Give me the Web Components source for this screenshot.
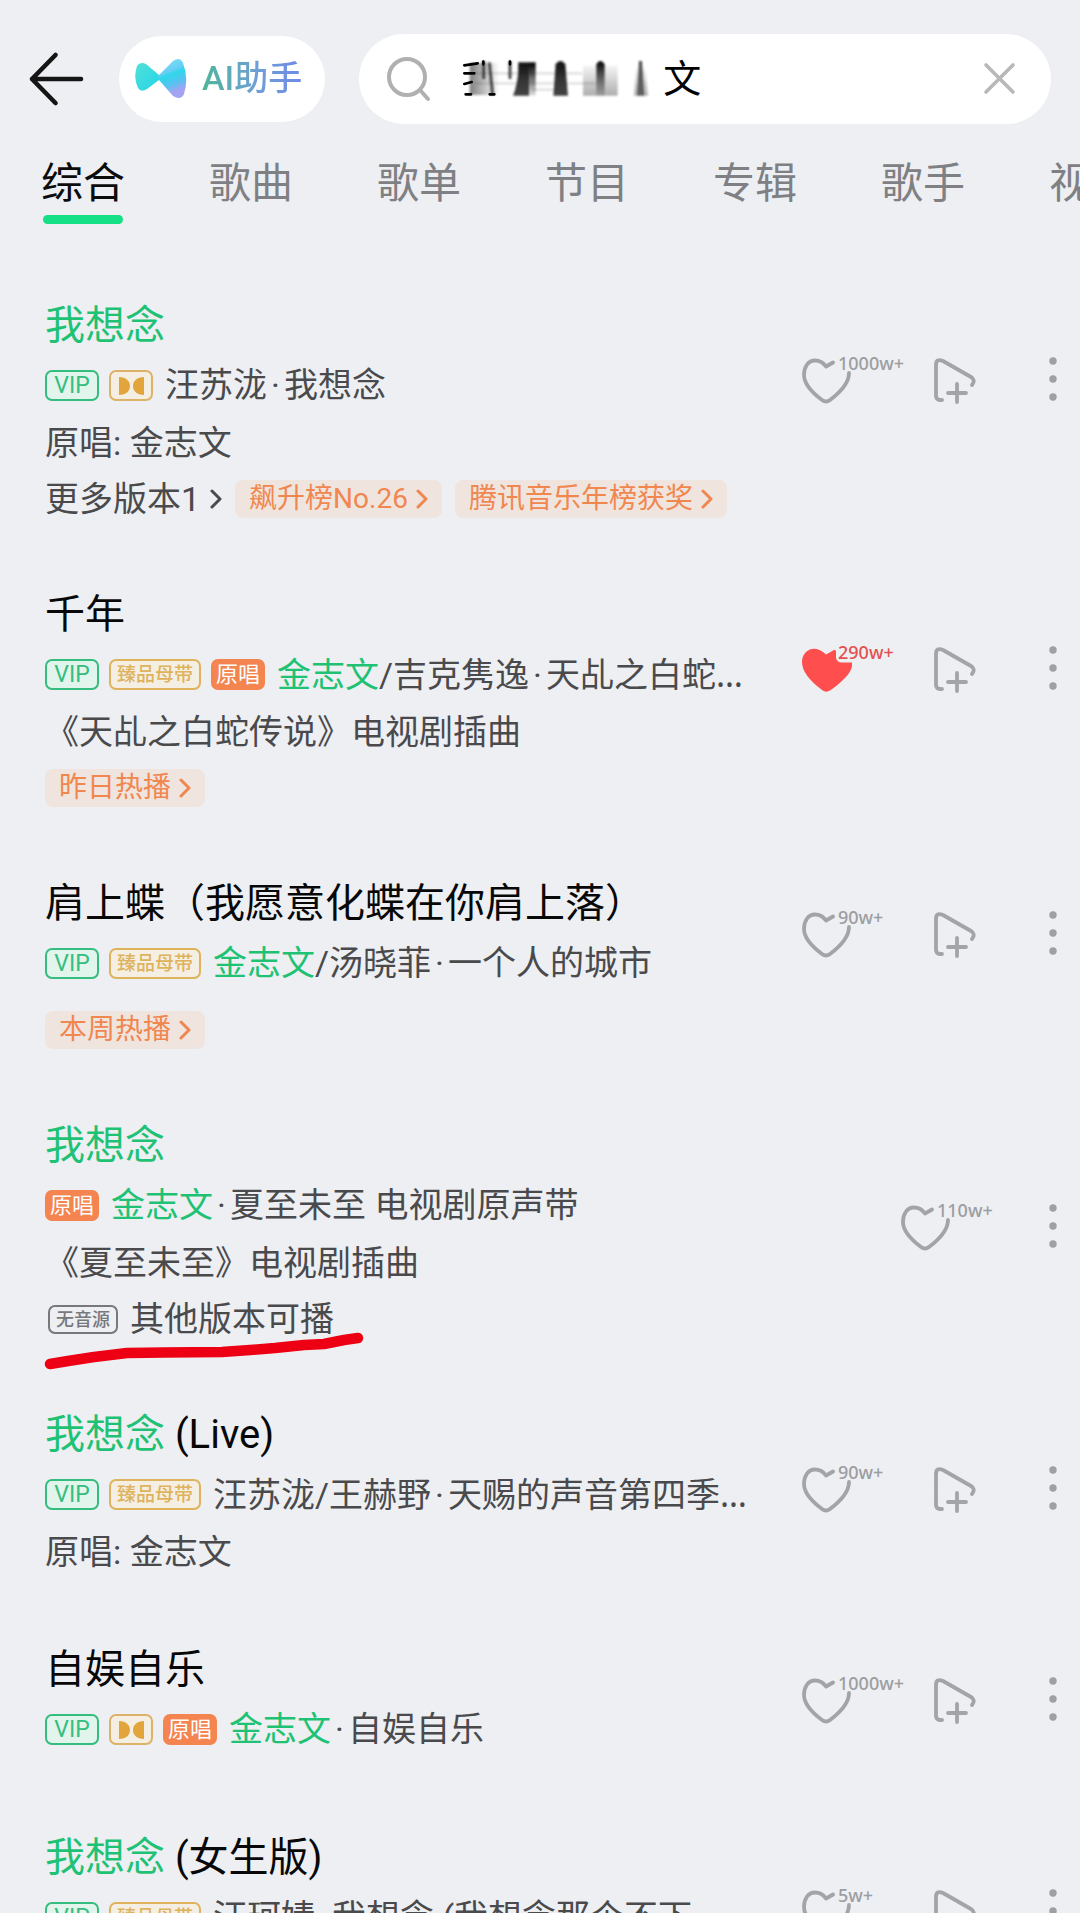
<!DOCTYPE html>
<html lang="zh-CN">
<head>
<meta charset="utf-8">
<meta name="viewport" content="width=device-width, initial-scale=1">
<title>搜索</title>
<style>
  body {
    margin: 0;
    background: #edeff3;
    color: #4a4a4c;
    font-family: Roboto, "Noto Sans CJK SC", sans-serif;
  }
  song-item mark { background: none; color: #1fc274; }
  song-item i { font-style: normal; font-family: "Noto Sans", sans-serif; }
</style>
</head>
<body>
<search-page>
  <search-header slot="header"></search-header>
  <category-tabs slot="tabs" items="综合,歌曲,歌单,节目,专辑,歌手,视频" current="综合"></category-tabs>

  <song-item count="1000w+">
    <mark slot="title">我想念</mark>
    <song-badge slot="badges" kind="vip">VIP</song-badge>
    <song-badge slot="badges" kind="sound"></song-badge>
    <span slot="sub">汪苏泷<mid-dot></mid-dot>我想念</span>
    <span slot="note">原唱: 金志文</span>
    <more-link slot="tags">更多版本1</more-link>
    <rank-tag slot="tags">飙升榜No.26</rank-tag>
    <rank-tag slot="tags">腾讯音乐年榜获奖</rank-tag>
  </song-item>

  <song-item count="290w+" liked>
    <span slot="title">千年</span>
    <song-badge slot="badges" kind="vip">VIP</song-badge>
    <song-badge slot="badges" kind="quality">臻品母带</song-badge>
    <song-badge slot="badges" kind="origin">原唱</song-badge>
    <span slot="sub"><mark>金志文</mark>/吉克隽逸<mid-dot></mid-dot>天乩之白蛇<i>…</i></span>
    <span slot="note">《天乩之白蛇传说》电视剧插曲</span>
    <rank-tag slot="tags">昨日热播</rank-tag>
  </song-item>

  <song-item count="90w+">
    <span slot="title">肩上蝶（我愿意化蝶在你肩上落）</span>
    <song-badge slot="badges" kind="vip">VIP</song-badge>
    <song-badge slot="badges" kind="quality">臻品母带</song-badge>
    <span slot="sub"><mark>金志文</mark>/汤晓菲<mid-dot></mid-dot>一个人的城市</span>
    <rank-tag slot="tags">本周热播</rank-tag>
  </song-item>

  <song-item count="110w+" unplayable>
    <mark slot="title">我想念</mark>
    <song-badge slot="badges" kind="origin">原唱</song-badge>
    <span slot="sub"><mark>金志文</mark><mid-dot></mid-dot>夏至未至 电视剧原声带</span>
    <span slot="note">《夏至未至》电视剧插曲</span>
    <song-badge slot="source" kind="muted">无音源</song-badge>
    <span slot="source">其他版本可播</span>
    <pen-stroke slot="overlay"></pen-stroke>
  </song-item>

  <song-item count="90w+">
    <span slot="title"><mark>我想念</mark> (Live)</span>
    <song-badge slot="badges" kind="vip">VIP</song-badge>
    <song-badge slot="badges" kind="quality">臻品母带</song-badge>
    <span slot="sub">汪苏泷/王赫野<mid-dot></mid-dot>天赐的声音第四季<i>…</i></span>
    <span slot="note">原唱: 金志文</span>
  </song-item>

  <song-item count="1000w+">
    <span slot="title">自娱自乐</span>
    <song-badge slot="badges" kind="vip">VIP</song-badge>
    <song-badge slot="badges" kind="sound"></song-badge>
    <song-badge slot="badges" kind="origin">原唱</song-badge>
    <span slot="sub"><mark>金志文</mark><mid-dot></mid-dot>自娱自乐</span>
  </song-item>

  <song-item count="5w+">
    <span slot="title"><mark>我想念</mark> (女生版)</span>
    <song-badge slot="badges" kind="vip">VIP</song-badge>
    <song-badge slot="badges" kind="quality">臻品母带</song-badge>
    <span slot="sub">汪珂婧<mid-dot></mid-dot>我想念 (我想念那个不下</span>
    <span slot="note">原唱: 金志文</span>
  </song-item>
</search-page>

<script>
const define = (name, render) => customElements.define(name, class extends HTMLElement {
  constructor() {
    super();
    this.attachShadow({ mode: 'open' });
  }
  connectedCallback() {
    this.shadowRoot.innerHTML = render(this);
  }
});

const buttonReset = 'button { appearance: none; border: 0; margin: 0; padding: 0; background: none; font: inherit; color: inherit; cursor: pointer; }';
const chevron = '<svg width="12" height="22" viewBox="0 0 12 22" fill="none" stroke="currentColor" stroke-width="3" stroke-linecap="round" stroke-linejoin="round" aria-hidden="true"><path d="M2 3 L10 11 L2 19"/></svg>';

define('search-page', () => `
  <style>
    :host { display: flex; flex-direction: column; height: 100vh; overflow: hidden; }
    main { flex: 1; min-height: 0; overflow-y: auto; scrollbar-width: none; padding-top: 71px; }
    main::-webkit-scrollbar { display: none; }
  </style>
  <slot name="header"></slot>
  <slot name="tabs"></slot>
  <main><slot></slot></main>`);

define('search-header', () => `
  <style>
    ${buttonReset}
    :host { display: flex; align-items: center; gap: 34px; padding: 34px 29px 0 28px; }
    svg { display: block; flex: none; }
    .lead { display: flex; align-items: center; gap: 34px; }
    .ai { display: flex; align-items: center; gap: 15px; height: 86px; padding: 0 23px 0 15px; border-radius: 43px; background: #fff; font-size: 34px; line-height: 40px; }
    .ai span { background: linear-gradient(90deg, #4fb59a, #6f9fd6 55%, #6f8ae6); -webkit-background-clip: text; background-clip: text; color: transparent; font-weight: 500; padding-bottom: 2px; }
    form { flex: 1; min-width: 0; display: flex; align-items: center; height: 90px; padding: 0 34px 0 27px; border-radius: 45px; background: #fff; }
    label { display: flex; align-items: center; gap: 32px; }
    input { flex: 1; min-width: 0; border: 0; outline: 0; padding: 0; background: none; color: #000; font: 400 38px/56px Roboto, "Noto Sans CJK SC", sans-serif; }
  </style>
  <div class="lead">
    <button aria-label="返回"><svg width="57" height="56" viewBox="0 0 57 56" fill="none" stroke="#151515" stroke-width="4.6" stroke-linecap="round" stroke-linejoin="round"><path d="M27.500 4 L4 28 L27.500 52 M4 28 H53"/></svg></button>
    <button class="ai">
      <svg width="53" height="42" viewBox="0 0 53 42" aria-hidden="true">
        <defs>
          <linearGradient id="l" x1="0" y1="0" x2="1" y2="1"><stop offset="0" stop-color="#52e0d4"/><stop offset="1" stop-color="#22d5ec"/></linearGradient>
          <linearGradient id="r" x1=".3" y1="0" x2=".6" y2="1"><stop offset="0" stop-color="#7be4f6"/><stop offset=".32" stop-color="#66cdf5"/><stop offset=".4" stop-color="#2ed8ea"/><stop offset=".66" stop-color="#5cc0f0"/><stop offset=".85" stop-color="#a3a3f2"/></linearGradient>
        </defs>
        <path fill="url(#l)" d="M3 8 Q6 3 12 6 L25 17 Q28 20 25 22 L13 31 Q7 35 4 30 Q-1 20 3 8Z"/>
        <path fill="url(#r)" d="M25 17 L39 3 Q46 -2 49 5 Q55 20 50 36 Q47 43 39 38 L25 22 Q23 20 25 17Z"/>
      </svg>
      <span>AI助手</span>
    </button>
  </div>
  <form role="search" onsubmit="return false">
    <label for="q" aria-label="搜索">
      <svg width="45" height="46" viewBox="0 0 45 46" fill="none" stroke="#b0b0b0" stroke-width="4" stroke-linecap="round"><circle cx="21" cy="21" r="18"/><path d="M34 34 L42 43"/></svg>
      <svg width="200" height="44" viewBox="42 24 600 132" aria-hidden="true">
        <defs>
          <linearGradient id="f" x1="0" y1="0" x2="0" y2="1"><stop offset="0" stop-color="#111"/><stop offset=".5" stop-color="#333"/><stop offset="1" stop-color="#444"/></linearGradient>
          <linearGradient id="g" x1="0" y1="0" x2="0" y2="1"><stop offset="0" stop-color="#000" stop-opacity=".04"/><stop offset="1" stop-color="#000" stop-opacity=".32"/></linearGradient>
          <linearGradient id="h" x1="0" y1="0" x2="1" y2="0"><stop offset="0" stop-color="#000" stop-opacity=".5"/><stop offset="1" stop-color="#000" stop-opacity="0"/></linearGradient>
          <linearGradient id="d" x1="0" y1="0" x2="0" y2="1"><stop offset="0" stop-color="#000"/><stop offset="1" stop-color="#000" stop-opacity=".12"/></linearGradient>
          <filter id="b"><feGaussianBlur stdDeviation="2.500"/></filter>
        </defs>
        <g filter="url(#b)">
          <path fill="url(#h)" d="M62 42 H150 V138 H62Z"/>
          <path fill="none" stroke="#000" stroke-opacity=".13" stroke-width="7" d="M80 73 H400 M80 103 H440 M250 122 H320"/>
          <path fill="none" stroke="#222" stroke-width="9" stroke-opacity=".8" d="M104 36 V90 M121 40 L131 138 M183 36 V90"/>
          <path fill="url(#d)" d="M208 40 H260 V140 H208Z"/>
          <path fill="url(#f)" d="M210 42 H240 V140 H192 Q206 110 210 42Z"/>
          <path fill="url(#f)" d="M320 46 Q334 26 349 46 L357 140 H313 Z"/>
          <path fill="url(#g)" d="M402 50 H506 V140 H402Z"/>
          <path fill="url(#d)" d="M442 46 Q454 26 467 46 L467 140 H442Z"/>
          <path fill="url(#g)" d="M560 60 H590 L597 140 H555Z"/>
          <path fill="url(#f)" opacity=".75" d="M570 36 H579 L586 140 H564Z"/>
        </g>
        <path fill="none" stroke="#000" stroke-width="8" stroke-linecap="round" d="M46 49 L86 43 M46 73 H76 M46 105 L68 99 M50 136 H66 M103 38 V46 M183 38 V46 M122 136 H136"/>
      </svg>
    </label>
    <input id="q" type="text" value="文">
    <button type="button" aria-label="清除"><svg width="34" height="34" viewBox="0 0 34 34" fill="none" stroke="#b8b8b8" stroke-width="3.6" stroke-linecap="round"><path d="M3 3 L30 30 M30 3 L3 30"/></svg></button>
  </form>`);

define('category-tabs', host => `
  <style>
    ${buttonReset}
    :host { display: block; padding-top: 32px; }
    nav { display: flex; gap: 84px; padding-left: 41px; overflow: hidden; }
    button { flex: none; display: flex; flex-direction: column; align-items: center; gap: 3px; font-size: 42px; line-height: 56px; color: #7f8083; }
    button::after { content: ""; width: 80px; height: 9px; border-radius: 5px; }
    [aria-current] { color: #0c0c0c; }
    [aria-current]::after { background: #16e085; }
  </style>
  <nav>${host.getAttribute('items').split(',').map(t =>
    `<button${t === host.getAttribute('current') ? ' aria-current="page"' : ''}>${t}</button>`).join('')}</nav>`);

define('mid-dot', () => `
  <style>:host { display: inline-block; width: 17px; text-align: center; }</style>·`);

define('song-badge', host => `
  <style>
    :host { display: inline-flex; flex: none; align-items: center; justify-content: center; box-sizing: border-box; height: 31px; border: 2px solid; border-radius: 7px; padding: 0 6px; line-height: 27px; white-space: nowrap; }
    :host([kind="vip"]) { width: 54px; color: #35bd80; background: #e2f5ec; font-size: 23px; }
    :host([kind="quality"]) { width: 92px; color: #deb35c; background: #f5efe3; font-size: 19px; font-weight: 500; }
    :host([kind="sound"]) { width: 44px; color: #dcb266; background: #f5efe3; }
    :host([kind="origin"]) { color: #fff; background: #f48450; border-color: #f48450; padding: 0 3px; font-size: 22px; }
    :host([kind="muted"]) { height: 29px; line-height: 25px; color: #77787c; font-size: 18px; font-weight: 500; }
    svg { display: block; }
    .vip { padding-top: 2px; font-family: "Noto Sans", sans-serif; }
  </style>
  ${host.getAttribute('kind') === 'sound'
    ? '<svg width="27" height="20" viewBox="0 0 27 20" fill="#e2a53c" role="img" aria-label="音效"><path d="M1 1 C8 1 12 5 12 10 C12 15 8 19 1 19Z M26 1 C19 1 15 5 15 10 C15 15 19 19 26 19Z"/></svg>'
    : '<slot></slot>'}`);

define('rank-tag', () => `
  <style>
    :host { display: block; flex: none; }
    a { display: flex; align-items: center; gap: 8px; height: 38px; padding: 0 14px; border-radius: 8px; background: #f0e4de; color: #f0874f; font-size: 28px; line-height: 38px; text-decoration: none; white-space: nowrap; }
  </style>
  <a href="#"><slot></slot>${chevron}</a>`);

define('more-link', () => `
  <style>
    :host { display: block; flex: none; }
    a { display: flex; align-items: center; gap: 10px; color: inherit; font-size: 34px; line-height: 46px; text-decoration: none; white-space: nowrap; }
  </style>
  <a href="#"><slot></slot>${chevron}</a>`);

define('pen-stroke', () => `
  <style>
    :host { position: absolute; left: 44px; top: 217px; }
    svg { display: block; }
  </style>
  <svg width="322" height="38" viewBox="0 0 322 38" fill="none" stroke="#ed0013" stroke-width="10.500" stroke-linecap="round" stroke-linejoin="round" aria-hidden="true"><path d="M6 32 L24 29 L50 25 L83 21 L120 20.500 L178 20 L206 18 L231 16 L260 13 L280 12 L300 8 L314 6"/></svg>`);

define('like-button', host => {
  const liked = host.hasAttribute('liked');
  return `
  <style>
    ${buttonReset}
    :host { display: block; width: 132px; color: ${liked ? '#e4504f' : '#9c9da1'}; }
    button { display: flex; align-items: flex-start; width: 100%; }
    svg { display: block; flex: none; }
    span { margin-left: -14px; font-size: 18px; line-height: 18px; font-weight: 500; font-family: "Noto Sans", sans-serif; }
  </style>
  <button aria-label="喜欢" aria-pressed="${liked}">
    <svg width="50" height="50" viewBox="0 -4 50 50" fill="none" stroke-width="3.800" stroke-linecap="round" stroke-linejoin="round">${liked
      ? '<path fill="#ff4e4e" d="M24 7.500 L32 3 Q34 2 34 6 V11 Q35 15 39 15.500 H50 Q51 23 43 31 Q35 39 28 43.500 Q24 46 20 43 Q0 28 0 15 C0 3 13 -4 24 7.500Z"/>'
      : '<path stroke="#a3a4a8" d="M31 4.500 L24 8.500 C21 4 17 2.500 13 2.500 C6 2.500 2 9 2 17 C2 27 12 36 20 42 Q24 45 28 42 C36 36 47 26 47 15"/>'}</svg>
    <span>${host.getAttribute('count')}</span>
  </button>`;
});

define('song-item', host => {
  const has = name => !!host.querySelector(`:scope > [slot="${name}"]`);
  const playable = !host.hasAttribute('unplayable');
  return `
  <style>
    ${buttonReset}
    :host { display: block; position: relative; padding-bottom: 58px; }
    .body { display: flex; align-items: center; }
    .info { flex: 1; min-width: 0; padding-left: 45px; padding-bottom: ${has('note') ? 0 : 11}px; }
    h2 { margin: 0; font-size: 40px; font-weight: 400; line-height: 62px; color: #080808; white-space: nowrap; }
    .row { display: flex; align-items: center; gap: 10px; font-size: 34px; white-space: nowrap; }
    .sub { height: 57px; line-height: 57px; }
    .sub .text { margin-left: 2px; }
    .note { line-height: 58px; }
    .source, .tags { height: 54px; line-height: 54px; }
    .source { gap: 12px; padding-left: 3px; }
    .tags { gap: 13px; padding-left: 45px; }
    .actions { flex: none; display: flex; align-items: center; padding-bottom: 10px; }
    .actions svg { display: block; }
    .play { width: 99px; }
    .menu { width: 47px; padding-left: 16px; box-sizing: border-box; }
  </style>
  <div class="body">
    <div class="info">
      <h2><slot name="title"></slot></h2>
      <div class="row sub"><slot name="badges"></slot><span class="text"><slot name="sub"></slot></span></div>
      ${has('note') ? '<div class="row note"><slot name="note"></slot></div>' : ''}
      ${has('source') ? '<div class="row source"><slot name="source"></slot></div>' : ''}
    </div>
    <div class="actions">
      <like-button count="${host.getAttribute('count')}"${host.hasAttribute('liked') ? ' liked' : ''}></like-button>
      ${playable ? '<button class="play" aria-label="添加到播放列表"><svg width="44" height="50" viewBox="0 -4 44 50" fill="none" stroke="#a3a4a8" stroke-width="3.800" stroke-linecap="round" stroke-linejoin="round"><path d="M8 42 H6 Q2 42 2 38 V7 Q2 0 9 3 L37 19 Q42 22 38 27 M23 26 V44 M14 35 H32"/></svg></button>' : ''}
      <button class="menu" aria-label="更多"><svg width="8" height="46" viewBox="0 0 8 46" fill="#9fa0a4"><circle cx="4" cy="5" r="3.700"/><circle cx="4" cy="23" r="3.700"/><circle cx="4" cy="41" r="3.700"/></svg></button>
    </div>
  </div>
  ${has('tags') ? '<div class="row tags"><slot name="tags"></slot></div>' : ''}
  <slot name="overlay"></slot>`;
});
</script>
</body>
</html>
